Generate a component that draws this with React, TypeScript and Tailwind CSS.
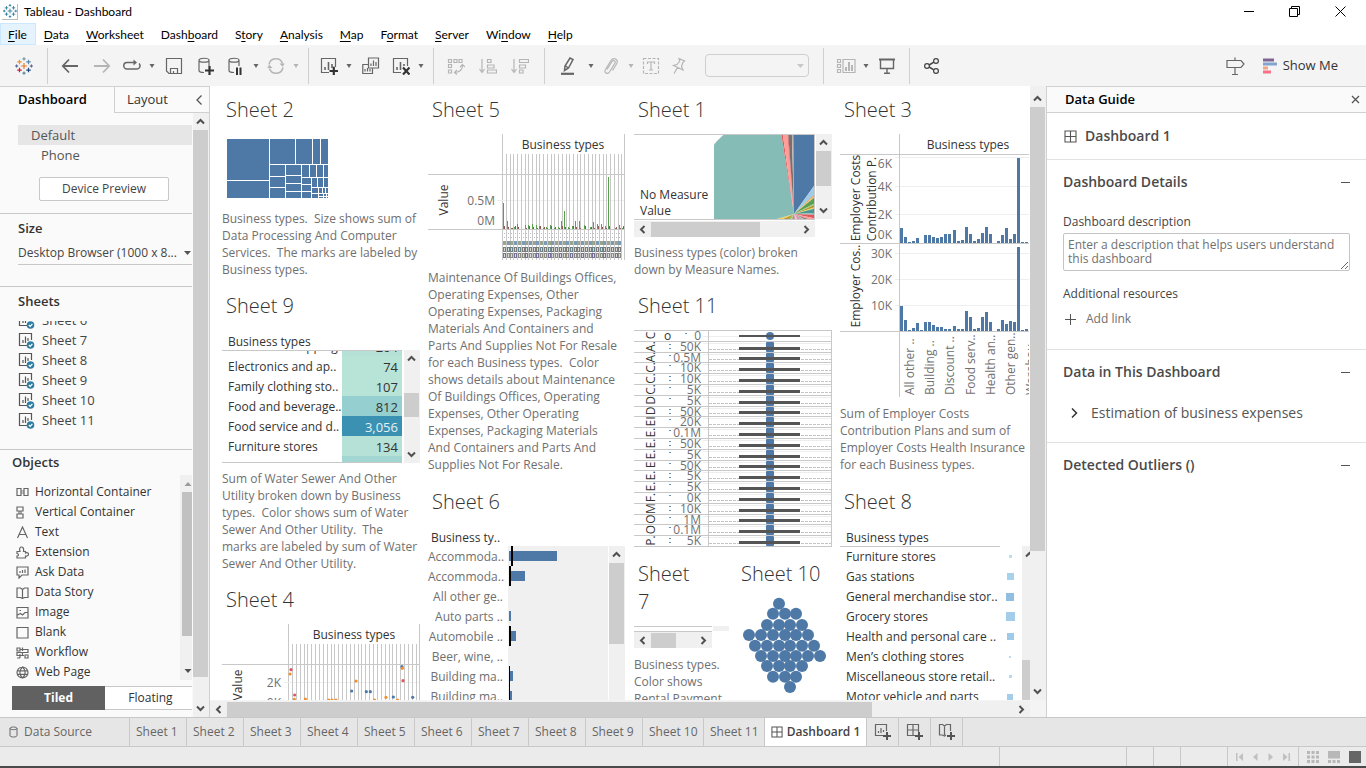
import React from "react";
import { clsx } from "clsx";

type Kids = { children?: React.ReactNode };

/* ---------- small shared pieces ---------- */

function Chevron({ dir, className }: { dir: "up" | "down" | "left" | "right"; className?: string }) {
  const d = {
    up: "M2 7.5 L5.5 4 L9 7.5",
    down: "M2 3.5 L5.5 7 L9 3.5",
    left: "M7.5 2 L4 5.5 L7.5 9",
    right: "M3.5 2 L7 5.5 L3.5 9",
  }[dir];
  return (
    <svg width="11" height="11" viewBox="0 0 11 11" className={className} fill="none" stroke="#505050" strokeWidth="2">
      <path d={d} />
    </svg>
  );
}

function VScroll({ className, lead = "", thumb, tight }: { className?: string; lead?: string; thumb: string; tight?: boolean }) {
  return (
    <div className={clsx("flex w-4 shrink-0 flex-col bg-[#f0f0f0]", className)}>
      <div className="flex h-[17px] w-[15px] shrink-0 items-center justify-center">
        <Chevron dir="up" />
      </div>
      <div className="flex min-h-0 w-full flex-1 flex-col">
        <div className={clsx("shrink-0", lead)} />
        <div className={clsx("w-[15px] shrink-0 bg-[#cdcdcd]", thumb)} />
      </div>
      {!tight && (
        <div className="flex h-[17px] w-[15px] shrink-0 items-center justify-center">
          <Chevron dir="down" />
        </div>
      )}
    </div>
  );
}

function HScroll({ className, thumb }: { className?: string; thumb: string }) {
  return (
    <div className={clsx("flex h-4 shrink-0 items-center bg-[#f0f0f0]", className)}>
      <div className="flex w-[17px] shrink-0 justify-center">
        <Chevron dir="left" />
      </div>
      <div className="h-[15px] min-w-0 flex-1">
        <div className={clsx("h-full bg-[#cdcdcd]", thumb)} />
      </div>
      <div className="flex w-[17px] shrink-0 justify-center">
        <Chevron dir="right" />
      </div>
    </div>
  );
}

function TableauLogo({ size, mono }: { size: number; mono?: boolean }) {
  const crosses: [number, number, number, string][] = [
    [10, 10, 3.4, "#e8762d"],
    [5, 5.5, 2.5, "#eb912c"],
    [15, 5.5, 2.5, "#5c87a8"],
    [5, 14.5, 2.5, "#c72035"],
    [15, 14.5, 2.5, "#1f457e"],
    [10, 2, 1.8, "#7199a6"],
    [10, 18, 1.8, "#59879b"],
    [1.8, 10, 1.8, "#5b6591"],
    [18.2, 10, 1.8, "#5b6591"],
  ];
  return (
    <svg width={size} height={size} viewBox="0 0 20 20" fill="none" strokeWidth="1.3">
      {crosses.map(([x, y, r, c]) => (
        <path key={`${x}-${y}`} d={`M${x - r} ${y}H${x + r}M${x} ${y - r}V${y + r}`} stroke={mono ? "#2f7f9f" : c} />
      ))}
    </svg>
  );
}

function Icon({ children, w = 18, h = 18, color = "#666" }: Kids & { w?: number; h?: number; color?: string }) {
  return (
    <svg width={w} height={h} viewBox={`0 0 ${w} ${h}`} fill="none" stroke={color} strokeWidth="1.2">
      {children}
    </svg>
  );
}

/* ---------- menu and toolbar ---------- */

const menus: [string, number][] = [
  ["File", 0], ["Data", 0], ["Worksheet", 0], ["Dashboard", 4], ["Story", 1], ["Analysis", 0],
  ["Map", 0], ["Format", 1], ["Server", 0], ["Window", 2], ["Help", 0],
];

function Tool({ label, w = "w-8", children }: Kids & { label: string; w?: string }) {
  return (
    <button aria-label={label} className={clsx("flex h-full shrink-0 items-center justify-center", w)}>
      {children}
    </button>
  );
}

function Caret({ label, light }: { label: string; light?: boolean }) {
  return (
    <button aria-label={label} className="flex h-full w-3 shrink-0 items-center justify-center">
      <svg width="6" height="4" viewBox="0 0 6 4" fill={light ? "#b5b5b5" : "#666"}>
        <path d="M0.5 0H5.5L3 4Z" />
      </svg>
    </button>
  );
}

const Sep = () => <div className="h-9 w-px shrink-0 bg-[#d0d0d0]" />;

function Toolbar() {
  const g = "#b5b5b5";
  return (
    <div className="flex h-[41px] shrink-0 items-center bg-[#f4f4f4]">
      <Tool label="Start page" w="w-[47px]"><TableauLogo size={18} /></Tool>
      <Sep />
      <div className="flex h-full items-center px-1.5">
        <Tool label="Undo"><Icon><path strokeWidth="1.8" d="M17 9H2M8 2.5L1.8 9L8 15.5" /></Icon></Tool>
        <Tool label="Redo"><Icon color={g}><path strokeWidth="1.8" d="M1 9H16M10 2.5L16.2 9L10 15.5" /></Icon></Tool>
        <Tool label="Replay" w="w-7"><Icon><path d="M11 5.500H4A3.200 3.200 0 0 0 4 12H14A3.200 3.200 0 0 0 16 6.500" strokeWidth="1.500" /><path d="M10.500 2.500L14 5.500L10.500 8.500Z" fill="#666" stroke="none" /></Icon></Tool>
        <Caret label="Replay options" />
        <Tool label="Save"><Icon><path d="M1.5 1.5H16.5V16.5H4L1.5 14ZM5.5 16V11.5H12.5V16M8.5 16V14" /></Icon></Tool>
        <Tool label="New data source"><Icon><path d="M2 3.2C2 0.6 12 0.6 12 3.2S2 5.800 2 3.200V13.500C2 15 4.500 15.500 7 15.500M12 3.200V9" /><path d="M8 13.500H17M12.500 9V18" strokeWidth="2.200" stroke="#333" /></Icon></Tool>
        <Tool label="Pause updates" w="w-7"><Icon><path d="M2 3.2C2 0.6 12 0.6 12 3.2S2 5.8 2 3.2V13.5C2 15 4 15.500 7 15.500M12 3.200V9" /><path d="M10 10.500V18M13.500 10.500V18" strokeWidth="2" stroke="#333" /></Icon></Tool>
        <Caret label="Pause options" />
        <Tool label="Refresh" w="w-7"><Icon color={g}><path d="M2 7.500A7 7 0 0 1 15.500 6.500M16 10.500A7 7 0 0 1 2.500 11.500" strokeWidth="1.500" /><path d="M12.500 6.500H17.800L15.500 9.800ZM0.200 11H5.500L2.300 7.800Z" fill={g} stroke="none" /></Icon></Tool>
        <Caret label="Refresh options" light />
      </div>
      <Sep />
      <div className="flex h-full items-center px-1.5">
        <Tool label="New worksheet" w="w-7"><Icon><path d="M9 15.500H1.500V1.500H15.500V10" /><path d="M5 13V10M8.500 13V5M12 11V7" strokeWidth="1.600" /><path d="M9.500 14H18M13.800 9.800V18" strokeWidth="2.200" stroke="#333" /></Icon></Tool>
        <Caret label="Worksheet options" />
        <Tool label="Duplicate"><Icon><path d="M6.500 1H16.500V11H6.500ZM10.500 11V16.500H0.800V7.500H6" /><path d="M9 9V6.500M11.500 9V3.500M14 9V5M3 14.500V12M5.500 14.500V11M8 14.500V12" /></Icon></Tool>
        <Tool label="Clear sheet" w="w-7"><Icon><path d="M9 15.500H1.500V1.500H15.500V9" /><path d="M5 13V10M8.500 13V5M12 9V7" strokeWidth="1.600" /><path d="M11 10.500L17.500 17.500M17.500 10.500L11 17.500" strokeWidth="2.200" stroke="#333" /></Icon></Tool>
        <Caret label="Clear options" />
      </div>
      <Sep />
      <div className="flex h-full items-center pr-2 pl-1.5">
        <Tool label="Swap rows and columns"><Icon color={g}><path d="M1.500 2.500H4.500V5.500H1.500ZM7 2.500H10V5.500H7ZM12 2.500H15V5.500H12ZM1.500 7.500H4.500V10.500H1.500ZM1.500 13H4.500V16H1.500ZM15.500 8C15.500 12 13 15 8 15.500" /><path d="M13 10L15.500 7.500L18 10M10 13L7.500 15.500L10 17.500" /></Icon></Tool>
        <Tool label="Sort ascending"><Icon color={g}><path d="M3 2V15M0.500 12L3 15.500L5.500 12M8.500 2.500H12V5.500H8.500ZM8.500 8H15V11H8.500ZM8.500 13H17.500V16H8.500Z" /></Icon></Tool>
        <Tool label="Sort descending"><Icon color={g}><path d="M3 2V15M0.500 12L3 15.500L5.500 12M8.500 2.500H17.500V5.500H8.500ZM8.500 8H14.500V11H8.500ZM8.500 13H12V16H8.500Z" /></Icon></Tool>
      </div>
      <Sep />
      <div className="flex h-full items-center pr-[13px] pl-2">
        <Tool label="Highlight"><Icon><path d="M10 1L13 2.500L8.500 11L4.500 13.500L5 9ZM5.500 9L8.500 11" strokeWidth="1.500" /><path d="M1 16.800H14" strokeWidth="2.200" /></Icon></Tool>
        <Caret label="Highlight options" />
        <Tool label="Group" w="w-7"><Icon color={g}><path d="M5 12.500L10 4.500C11.500 2.500 14 4 13 6L7.500 15C5.500 18 1.500 15.500 3.500 12.500L9 3.500C11.500 -0.500 17 2.500 14.500 7L10.500 13.500" /></Icon></Tool>
        <Caret label="Group options" light />
        <Tool label="Show mark labels" w="w-7"><Icon color={g}><path d="M1.500 1.500H16.500V16.500H1.500Z" strokeDasharray="3 1.500" /><path d="M5.500 7V5H12.500V7M9 5V13M7 13H11" /></Icon></Tool>
        <Tool label="Fix axes" w="w-7"><Icon color={g}><path d="M9 1.500L14.500 4L12.800 5.500L11.500 9.500L13 13L3.500 8.500L7 7.500L9.800 4ZM7.500 10.500L4 16.500" /></Icon></Tool>
        <select aria-label="Fit" disabled className="ml-3 h-[23px] w-[104px] appearance-none rounded-sm border border-[#cfcfcf] bg-transparent" />
        <svg width="7" height="4" viewBox="0 0 7 4" fill="#c8c8c8" className="mr-1.5 -ml-3"><path d="M0 0H7L3.500 4Z" /></svg>
      </div>
      <Sep />
      <div className="flex h-full items-center px-2">
        <Tool label="Show cards" w="w-7"><Icon w={20} color={g}><path d="M1.500 2.500H4.500V5.500H1.500ZM1.500 7.500H4.500V10.500H1.500ZM1.500 12.500H4.500V15.500H1.500ZM7 2.500H19V15.500H7Z" /><path d="M10 14V10M13 14V5M16 14V8" strokeWidth="2" /></Icon></Tool>
        <Caret label="Card options" />
        <Tool label="Presentation mode" w="w-[29px]"><Icon><path d="M1 2.500H17" strokeWidth="2" /><path d="M2.500 3V11.500H15.500V3M9 11.500V16M6 16.300H12" strokeWidth="1.400" /></Icon></Tool>
      </div>
      <Sep />
      <div className="flex h-full items-center px-1.5">
        <Tool label="Share"><Icon color="#444"><circle cx="4" cy="9" r="2.400" /><circle cx="13" cy="4" r="2.400" /><circle cx="13" cy="14" r="2.400" /><path d="M6.200 8L10.800 5.200M6.200 10L10.800 12.800" strokeWidth="1.500" /></Icon></Tool>
      </div>
      <div className="ml-auto flex h-full items-center pr-7">
        <Tool label="Tour"><Icon w={20}><path d="M2 3.500H16L19 7L16 10.500H2ZM10 0.500V3.500M10 10.500V18M7 17.500H13" /></Icon></Tool>
        <button className="ml-3 flex h-full items-center gap-1.5 text-[13px] text-[#333]">
          <svg width="14" height="16" viewBox="0 0 14 16">
            <path fill="#7e6594" d="M0 0.500H11V3.500H0Z" /><path fill="#83a4cf" d="M0 4.500H14V7.500H0Z" />
            <path fill="#f4a582" d="M0 8.500H5V11.500H0Z" /><path fill="#fb7086" d="M0 12.500H8V15.500H0Z" />
          </svg>
          Show Me
        </button>
      </div>
    </div>
  );
}

/* ---------- left pane ---------- */

function SheetIcon() {
  return (
    <svg width="18" height="18" viewBox="0 0 18 18" fill="none" stroke="#555" strokeWidth="1.200">
      <path d="M9 13.500H1.500V1.500H13.500V8M5 11V8M7.500 11V4.500M10 9V6" />
      <circle cx="12.500" cy="13" r="3.800" fill="#2f7ea1" stroke="none" />
      <path d="M10.800 13L12.200 14.400L14.400 11.800" stroke="#fff" />
    </svg>
  );
}

const objects: [string, React.ReactNode][] = [
  ["Horizontal Container", <g key="p"><path d="M5 4H8V8H5Z" fill="#c4c4c4" stroke="none" /><path d="M1 2.500H5V9.500H1ZM8 2.500H12V9.500H8Z" /></g>],
  ["Vertical Container", <g key="p"><path d="M2 5H6V8H2Z" fill="#aaa" stroke="none" /><path d="M1 1H7V5H1ZM1 8H7V12H1Z" /></g>],
  ["Text", <path key="p" d="M1.500 12L6.500 1L11.500 12M3.500 8.500H9.500" />],
  ["Extension", <path key="p" d="M1 5.500H4C3 2.500 4 1 5.500 1S8 2.500 7.500 5.500H9.500V7C12 6 12.500 7.500 12.500 8.500S11 10.500 9.500 10V12H1V10C3 10 3 7.500 1 7.500Z" />],
  ["Ask Data", <path key="p" d="M1 1H12V9H6L3 12V9H1ZM4 7V5M6.500 7V4M9 7V3.500" />],
  ["Data Story", <path key="p" d="M1 2H4.500L6.500 3.500L8.500 2H12V11.500H8.500L6.500 12.500L4.500 11.500H1ZM6.500 3.500V12" />],
  ["Image", <path key="p" d="M1 1.500H12V12H1ZM1.500 9L4.500 7.500L6.500 9L9 6.500H12M3.500 4.500H5" />],
  ["Blank", <path key="p" d="M1 1.500H12V12H1Z" />],
  ["Workflow", <path key="p" d="M1 2H4V5H1ZM4 3.500H12V6.500H1V9.500H8M6.500 1.500V5M4 8V12M1 12H4M9 9H12V12H9ZM6.500 6V9" />],
  ["Web Page", <path key="p" d="M6.500 1A5.500 5.500 0 1 0 6.500 12A5.500 5.500 0 1 0 6.500 1C3 4 3 9 6.500 12C10 9 10 4 6.500 1M1.500 4.800H11.500M1.500 8.300H11.500" />],
];

function LeftPane() {
  return (
    <aside className="flex w-[210px] shrink-0 flex-col border-t border-r border-[#d0d0d0] bg-[#fafafa]">
      <div className="flex h-[26px] shrink-0 text-[13px] text-[#333]">
        <button className="w-[114px] pl-[18px] text-left font-semibold text-black">Dashboard</button>
        <button className="flex-1 border-b border-l border-[#d0d0d0] pl-3 text-left">Layout</button>
        <button aria-label="Collapse pane" className="flex w-3.5 items-center border-b border-[#d0d0d0]">
          <svg width="8" height="10" viewBox="0 0 8 10" fill="none" stroke="#555" strokeWidth="1.300"><path d="M6.500 0.500L2 5L6.500 9.500" /></svg>
        </button>
      </div>
      <div className="flex min-h-0 flex-1">
        <div className="flex min-h-0 flex-1 flex-col pt-3">
          <button className="ml-[18px] h-5 shrink-0 bg-[#e6e6e6] pl-[13px] text-left text-[13px] leading-4 text-[#555]">Default</button>
          <button className="ml-[18px] h-5 shrink-0 pl-[23px] text-left text-[13px] leading-4 text-[#555]">Phone</button>
          <button className="mt-3 ml-[39px] h-6 w-[130px] shrink-0 rounded-xs border border-[#c8c8c8] bg-white text-xs text-[#444]">Device Preview</button>
          <div className="mt-3 h-[73px] shrink-0 border-t border-[#c8c8c8] pt-1 pl-[18px]">
            <label htmlFor="size" className="block text-[13px] leading-5 font-semibold text-[#333]">Size</label>
            <div className="mt-1 flex h-[23px] items-center border-b border-[#c8c8c8]">
              <select id="size" className="w-full min-w-0 appearance-none bg-transparent text-xs text-[#444]">
                <option>Desktop Browser (1000 x 8...</option>
              </select>
              <svg width="7" height="4" viewBox="0 0 7 4" fill="#555" className="mr-px shrink-0"><path d="M0 0H7L3.500 4Z" /></svg>
            </div>
          </div>
          <div className="flex h-[163px] shrink-0 flex-col border-t border-[#c8c8c8] pt-1">
            <h2 className="pl-[18px] text-[13px] leading-5 font-semibold text-[#333]">Sheets</h2>
            <div className="mt-2.5 flex h-[110px] flex-col justify-end overflow-hidden text-[13px] text-[#444]">
              {[6, 7, 8, 9, 10, 11].map((n) => (
                <a key={n} href={`#sheet-${n}`} className="flex h-5 shrink-0 items-center gap-1.5 pl-[18px]">
                  <SheetIcon /> Sheet {n}
                </a>
              ))}
            </div>
          </div>
          <div className="flex min-h-0 flex-1 flex-col border-t border-[#c8c8c8]">
            <h2 className="h-[25px] shrink-0 pt-0.5 pl-3 text-[13px] leading-5 font-semibold text-[#333]">Objects</h2>
            <div className="flex min-h-0 flex-1">
              <ul className="min-w-0 flex-1 overflow-hidden pt-[7px] text-xs text-[#333]">
                {objects.map(([name, icon]) => (
                  <li key={name} className="flex h-5 items-center gap-1.5 pl-4">
                    <Icon w={13} h={13}>{icon}</Icon> {name}
                  </li>
                ))}
              </ul>
              <div className="flex w-3 flex-col items-end bg-[#f0f0f0]">
                <svg width="10" height="17" viewBox="0 0 10 17" fill="#9a9a9a"><path d="M2.500 11H9.500L6 7Z" /></svg>
                <div className="h-[70%] w-2.5 bg-[#c1c1c1]" />
                <svg width="10" height="17" viewBox="0 0 10 17" fill="#505050" className="mt-auto"><path d="M2.500 6H9.500L6 10Z" /></svg>
              </div>
            </div>
            <div className="mt-1.5 mb-[7px] ml-3 flex h-6 shrink-0 text-xs">
              <button className="w-[93px] bg-[#616161] font-bold text-white">Tiled</button>
              <button className="flex-1 border-y border-[#c8c8c8] bg-white pl-1 text-[#333]">Floating</button>
            </div>
          </div>
        </div>
        <VScroll className="ml-px" thumb="h-[96%]" />
      </div>
    </aside>
  );
}

/* ---------- dashboard sheets ---------- */

function Sheet({ title, h, children, caption }: Kids & { title: string; h: string; caption?: string }) {
  return (
    <section className={clsx("shrink-0 overflow-hidden pl-1", h)}>
      <h2 className="pt-1.5 pb-0.5 pl-1 text-xl leading-7 font-light whitespace-pre text-[#333]">{title}</h2>
      {children}
      {caption && <p className="text-xs leading-[17px] whitespace-pre text-[#707070]">{caption}</p>}
    </section>
  );
}

type ChartProps = Kids & { x: number; y: number; w: number; h: number };
function Chart({ x, y, w, h, children }: ChartProps) {
  return (
    <svg width={w} height={h} viewBox={`${x} ${y} ${w} ${h}`} className="block max-w-none" fontSize="12" fill="#707070">
      {children}
    </svg>
  );
}

function Line({ x1, y1, x2, y2, c = "#c8c8c8" }: { x1: number; y1: number; x2: number; y2: number; c?: string }) {
  return x1 === x2
    ? <rect x={x1} y={y1} width="1" height={y2 - y1} fill={c} />
    : <rect x={x1} y={y1} width={x2 - x1} height="1" fill={c} />;
}

function Turned({ x, y, children, fill = "#333", anchor = "middle" }: { x: number; y: number; children: string; fill?: string; anchor?: "middle" | "start" }) {
  return <text transform={`translate(${x} ${y}) rotate(-90)`} textAnchor={anchor} fill={fill}>{children}</text>;
}

const blue = "#4e79a7";

const treemap: [number, number, number, number][] = [
  [45, 159, 171, 282], [45, 285, 171, 336], [174, 159, 249, 234], [252, 159, 300, 234], [303, 159, 324, 234], [327, 159, 348, 234],
  [174, 237, 219, 270], [174, 273, 219, 303], [174, 306, 219, 336], [222, 237, 267, 267], [222, 270, 267, 291], [222, 294, 267, 315], [222, 318, 267, 336],
  [270, 237, 291, 273], [294, 237, 312, 273], [315, 237, 333, 273], [336, 237, 348, 273],
  [270, 276, 297, 294], [270, 297, 297, 315], [270, 318, 297, 336], [300, 276, 315, 303], [318, 276, 333, 303], [336, 276, 348, 303],
  [300, 306, 318, 321], [300, 324, 318, 336], [321, 306, 330, 321], [333, 306, 339, 321], [342, 306, 348, 321],
  [321, 324, 333, 330], [321, 333, 333, 336], [336, 324, 342, 330], [336, 333, 342, 336], [345, 324, 348, 330], [345, 333, 348, 336],
];

const heat: [string, string, string][] = [
  ["Electronic shopping ..", "264", "bg-[#b6e1d6] text-[#333]"],
  ["Electronics and ap..", "74", "bg-[#b8e3d7] text-[#333]"],
  ["Family clothing sto..", "107", "bg-[#b8e3d7] text-[#333]"],
  ["Food and beverage..", "812", "bg-[#96cfd0] text-[#333]"],
  ["Food service and d..", "3,056", "bg-[#3a91b1] text-[#e4f1f5]"],
  ["Furniture stores", "134", "bg-[#b6e1d6] text-[#333]"],
  ["Gas stations", "586", "bg-[#a1d6d2] text-[#333]"],
];

const strip: [number, number, string][] = [
  [237, 629, "#e15759"], [234, 642, "#f28e2b"], [248, 705, "#e15759"], [247, 718, "#f28e2b"], [432, 663, "#f28e2b"], [419, 693, blue],
  [463, 695, blue], [475, 695, blue], [570, 620, blue], [571, 625, "#f28e2b"], [573, 662, "#e15759"], [522, 712, "#f28e2b"], [544, 711, blue],
  [602, 712, blue], [280, 717, "#f28e2b"], [350, 720, "#f28e2b"], [360, 720, "#f28e2b"], [372, 720, "#f28e2b"], [488, 720, "#f28e2b"], [557, 720, "#f28e2b"],
];

const spikes: [number, number][] = [
  [238, 351], [250, 405], [262, 426], [271, 423], [280, 414], [304, 417], [313, 417], [325, 414], [337, 417], [346, 420], [358, 426], [367, 423],
  [379, 417], [391, 426], [403, 423], [412, 405], [421, 375], [433, 423], [445, 420], [454, 405], [466, 405], [479, 417], [499, 423], [508, 408],
  [520, 414], [532, 414], [542, 420], [553, 273], [574, 426], [586, 417], [595, 426],
];

const tall = [426, 453, 468, 465, 456, 471, 447, 447, 453, 456, 453, 444, 444, 432, 465, 462, 423, 444, 465, 459, 441, 423, 444, 471, 465, 447, 426, 459, 444, 216, 468, 468];
const low = [660, 702, 732, 726, 711, 732, 708, 708, 717, 723, 723, 729, 729, 720, 729, 729, 675, 693, 729, 726, 693, 678, 708, 735, 729, 702, 714, 705, 708, 483, 732, 729];

const rowLines = [330, 341, 352, 362, 373, 384, 395, 406, 416, 427, 438, 449, 460, 470, 481, 492, 503, 514, 524, 535, 546];
const rowTicks = ["0", "50K", "0.5M", "10K", "10K", "5K", "5K", "50K", "20K", "0.1M", "50K", "5K", "50K", "5K", "5K", "0K", "10K", "1M", "0.1M", "5K"];
const rowNames = ["C", "A.", "A.", "C.", "C.", "C.", "D", "D", "EI", "E.", "E.", "E.", "E", "E.", "E.", "F.", "M", "O", "O", "P."];

const bubbles: [number, number[]][] = [
  [671, [447]], [701, [429, 465, 498]], [735, [411, 447, 480, 516]], [765, [357, 393, 429, 465, 498, 534]], [797, [375, 411, 447, 480, 516, 552]],
  [828, [393, 429, 465, 498, 534, 570]], [858, [411, 447, 480, 516]], [890, [429, 465, 498]], [921, [480]],
];

const slices: [number, number, string][] = [
  [0, 35.5, blue], [35.5, 46.5, "#a0cbe8"], [46.5, 49, "#f28e2b"], [49, 51, "#ffbe7d"], [51, 63, "#59a14f"], [63, 66, "#8cd17d"], [66, 72, "#b6992d"],
  [72, 75, "#f1ce63"], [75, 87, "#499894"], [87, 92, "#86bcb6"], [92, 102, "#e15759"], [102, 110, "#ff9d9a"], [110, 116, "#79706e"],
  [116, 132, "#bab0ac"], [132, 145, "#d37295"], [145, 170, "#fabfd2"], [170, 185, "#b07aa1"], [185, 198, "#4e79a7"], [198, 207, "#f28e2b"],
  [207, 222, "#8cd17d"], [222, 228, "#59a14f"], [228, 246, "#b6992d"], [246, 254, "#f1ce63"], [254, 351, "#86bcb6"], [351, 352, "#e15759"],
  [352, 355.3, "#ff9d9a"], [355.3, 355.9, "#e15759"], [355.9, 358.5, "#79706e"], [358.5, 359.5, "#bab0ac"], [359.5, 360, "#79706e"],
];

function slicePath(a: number, b: number) {
  const p = (d: number) => {
    const t = (d * Math.PI) / 180;
    return `${794 + 106 * Math.sin(t)} ${214 - 106 * Math.cos(t)}`;
  };
  return `M794 214L${p(a)}A106 106 0 0 1 ${p(b)}Z`;
}

const bars6: [string, number, number][] = [
  ["Accommoda..", 48, 2], ["Accommoda..", 16, 2], ["All other ge..", 0, 0], ["Auto parts ..", 2, 0],
  ["Automobile ..", 7, 2], ["Beer, wine, ..", 0, 0], ["Building ma..", 4, 1], ["Building ma..", 3, 1],
];

const rows8: [string, string][] = [
  ["Furniture stores", "size-[3px] bg-[#b9ddf1]"], ["Gas stations", "size-[7px] bg-[#a8d2ec]"], ["General merchandise stor..", "size-2 bg-[#92bfe0]"],
  ["Grocery stores", "size-[9px] bg-[#a3cde9]"], ["Health and personal care ..", "size-[7px] bg-[#9fcbe8]"], ["Men’s clothing stores", "size-0.5 bg-[#b9ddf1]"],
  ["Miscellaneous store retail..", "size-[3px] bg-[#b3daf0]"], ["Motor vehicle and parts", "size-1.5 bg-[#a3cde9]"],
];

function Canvas() {
  return (
    <div className="flex min-h-0 flex-1 overflow-hidden bg-white pt-1 pl-2">
      <div className="flex w-[206px] shrink-0 flex-col">
        <Sheet title="Sheet 2" h="h-[196px]" caption={"Business types.  Size shows sum of\nData Processing And Computer\nServices.  The marks are labeled by\nBusiness types."}>
          <Chart x={222} y={126} w={202} h={84}>
            {treemap.map(([a, b, c, d], i) => (
              <rect key={i} x={212 + a / 3} y={86 + b / 3} width={(c - a) / 3} height={(d - b) / 3} fill={blue} />
            ))}
          </Chart>
        </Sheet>
        <Sheet title="Sheet 9" h="h-[294px]" caption={"Sum of Water Sewer And Other\nUtility broken down by Business\ntypes.  Color shows sum of Water\nSewer And Other Utility.  The\nmarks are labeled by sum of Water\nSewer And Other Utility."}>
          <h3 className="h-7 pt-2.5 pl-1.5 text-xs leading-5 text-[#333]">Business types</h3>
          <div className="mb-[7px] flex h-[113px]">
            <div className="w-[180px] overflow-hidden border-y border-[#c8c8c8]">
              <table className="-mt-[15px] w-full table-fixed text-xs text-[#333]">
                <tbody>
                  {heat.map(([name, v, tone]) => (
                    <tr key={name} className="h-5">
                      <th scope="row" className="w-[120px] overflow-hidden p-0 pt-px pl-1.5 text-left leading-4 font-normal whitespace-nowrap">{name}</th>
                      <td className={clsx("p-0 pt-px pr-1 text-right text-[13px] leading-4", tone)}>{v}</td>
                    </tr>
                  ))}
                </tbody>
              </table>
            </div>
            <VScroll className="ml-0.5" lead="h-[26px]" thumb="h-6" />
          </div>
        </Sheet>
        <Sheet title="Sheet 4" h="h-[294px]">
          <Chart x={222} y={616} w={202} h={110}>
            <Line x1={288} y1={624} x2={288} y2={726} />
            <Line x1={419} y1={624} x2={419} y2={726} />
            <Line x1={222} y1={664} x2={420} y2={664} />
            <Line x1={284} y1={682} x2={419} y2={682} c="#eee" />
            {Array.from({ length: 33 }, (_, i) => {
              const x = Math.round(292 + i * 3.86);
              return <Line key={i} x1={x} y1={644} x2={x} y2={726} />;
            })}
            <text x="354" y="639" textAnchor="middle" fill="#333">Business types</text>
            <Turned x={242} y={685}>Value</Turned>
            <text x="281" y="687" textAnchor="end">2K</text>
            <text x="281" y="707" textAnchor="end">0K</text>
            {strip.map(([x, y, c], i) => <circle key={i} cx={212 + x / 3} cy={460 + y / 3} r="1.600" fill={c} />)}
          </Chart>
        </Sheet>
      </div>

      <div className="flex w-[206px] shrink-0 flex-col">
        <Sheet title="Sheet 5" h="h-[392px]" caption={"Maintenance Of Buildings Offices,\nOperating Expenses, Other\nOperating Expenses, Packaging\nMaterials And Containers and\nParts And Supplies Not For Resale\nfor each Business types.  Color\nshows details about Maintenance\nOf Buildings Offices, Operating\nExpenses, Other Operating\nExpenses, Packaging Materials\nAnd Containers and Parts And\nSupplies Not For Resale."}>
          <Chart x={428} y={126} w={202} h={143}>
            <Line x1={502} y1={134} x2={502} y2={260} />
            <Line x1={624} y1={134} x2={624} y2={260} />
            <Line x1={428} y1={174} x2={625} y2={174} />
            <Line x1={497} y1={200} x2={624} y2={200} c="#eee" />
            {Array.from({ length: 32 }, (_, i) => {
              const x = Math.round(506 + i * 3.72);
              return (
                <g key={i}>
                  <Line x1={x} y1={154} x2={x} y2={260} />
                  <rect x={x - 3} y={241} width="3" height="4" fill={i % 2 ? "#7d9ab5" : "#9aa38c"} />
                  <rect x={x - 3} y={247} width="3" height="5" fill={i % 2 ? "#7a7a7a" : "#6a8589"} />
                  <rect x={x - 3} y={253} width="3" height="5" fill={i % 3 ? "#8d8d86" : "#77709a"} />
                  <rect x={x - 2} y={248} width="1" height="3" fill="#d8d8d0" />
                  <rect x={x - 2} y={254} width="1" height="3" fill="#ddd" />
                  <rect x={x - 2} y={233} width="1" height="1" fill="#b9b9c4" />
                  <rect x={x - 2} y={237} width="1" height="1" fill="#b9b9c4" />
                </g>
              );
            })}
            {spikes.map(([x, y], i) => (
              <g key={i}>
                <rect x={Math.round(424 + x / 3)} y={86 + y / 3} width="1" height={(429 - y) / 3} fill="#59a14f" />
                <rect x={Math.round(424 + x / 3) + 1} y={226 + (i % 3)} width="1" height={3 - (i % 3)} fill="#8c5a4f" />
              </g>
            ))}
            <Line x1={428} y1={229} x2={625} y2={229} />
            <text x="563" y="149" textAnchor="middle" fill="#333">Business types</text>
            <Turned x={448} y={200}>Value</Turned>
            <text x="495" y="205" textAnchor="end">0.5M</text>
            <text x="495" y="225" textAnchor="end">0M</text>
          </Chart>
        </Sheet>
        <Sheet title="Sheet 6" h="h-[294px]">
          <h3 className="h-7 pt-2.5 pl-[3px] text-xs leading-5 text-[#333]">Business ty..</h3>
          <div className="flex">
            <ul className="w-[75px] shrink-0 pt-px text-right text-xs leading-5 text-[#707070]">
              {bars6.map(([name], i) => <li key={i} className="whitespace-nowrap">{name}</li>)}
            </ul>
            <svg width="100" height="160" viewBox="0 0 100 160" className="ml-[5px] shrink-0 bg-[#f0f0f0]">
              {bars6.map(([, w, ref], i) => (
                <g key={i}>
                  <rect x="1" y={i * 20 + 5} width={w} height="10" fill={blue} />
                  <rect x={i === 0 ? 3 : 1} y={i * 20} width={ref} height="20" fill="#000" />
                </g>
              ))}
            </svg>
            <VScroll className="ml-px" thumb="h-[81px]" tight />
          </div>
        </Sheet>
      </div>

      <div className="flex w-[206px] shrink-0 flex-col">
        <Sheet title="Sheet 1" h="h-[196px]" caption={"Business types (color) broken\ndown by Measure Names."}>
          <div className="flex pt-2">
            <div className="flex h-[86px] w-[181px] shrink-0 items-end border-y border-r border-[#c8c8c8]">
              <p className="w-20 pl-1.5 text-xs leading-4 whitespace-nowrap text-[#333]">No Measure<br />Value</p>
              <Chart x={714} y={135} w={100} h={84}>
                {slices.map(([a, b, c]) => <path key={a} d={slicePath(a, b)} fill={c} />)}
              </Chart>
            </div>
            <VScroll className="ml-px h-[85px]" thumb="h-[35px]" />
          </div>
          <HScroll className="mt-px mb-[7px] w-[181px]" thumb="w-[109px]" />
        </Sheet>
        <Sheet title="Sheet 11" h="h-[268px]">
          <Chart x={634} y={322} w={202} h={232}>
            {rowTicks.map((t, i) => {
              const top = rowLines[i];
              const end = rowLines[i + 1];
              return (
                <g key={i}>
                  <rect x="703" y={i ? top + 2 : 336} width="128" height="1" fill="#eee" />
                  {i > 0 && <path d={`M709 ${end - 2.5}H831`} stroke="#c4c4c4" strokeDasharray="3 1" />}
                  {i === 0 ? <circle cx="770" cy="336" r="4" fill={blue} /> : <rect x="766" y={top + 1} width="8" height={end - top - 1} rx="1" fill={blue} />}
                  <rect x="739" y={i ? end - 5 : 335} width="61" height={i ? 3 : 2} fill="#555" />
                  <Turned x={655} y={(top + end) / 2}>{rowNames[i]}</Turned>
                  <rect x={i ? 669 : 685} y={top + 3} width="2" height="1" fill="#5c8fc4" />
                  {i % 3 === 1 && <rect x="669" y={top + 7} width="2" height="1" fill="#5c8fc4" />}
                  <text x="701" y={top + 10} textAnchor="end">{t}</text>
                </g>
              );
            })}
            <text x="664" y="340" fill="#333">o</text>
            {rowLines.map((y) => <Line key={y} x1={634} y1={y} x2={832} y2={y} />)}
            <Line x1={708} y1={330} x2={708} y2={547} />
            <Line x1={831} y1={330} x2={831} y2={547} />
          </Chart>
        </Sheet>
        <div className="flex">
          <div className="w-[103px] shrink-0">
            <Sheet title={"Sheet\n7"} h="h-[196px]" caption={"Business types.\nColor shows\nRental Payment"}>
              <div className="mt-2 flex">
                <div className="h-1.5 w-[78px] border-y border-[#c8c8c8]" />
                <div className="ml-px h-[5px] w-4 bg-[#f0f0f0]" />
              </div>
              <HScroll className="mb-2 w-[78px]" thumb="w-[25px]" />
            </Sheet>
          </div>
          <Sheet title="Sheet 10" h="h-[196px]">
            <Chart x={737} y={590} w={98} h={110}>
              {bubbles.flatMap(([y, xs]) => xs.map((x) => <circle key={`${x}-${y}`} cx={630 + x / 3} cy={380 + y / 3} r="6" fill={blue} />))}
            </Chart>
          </Sheet>
        </div>
      </div>

      <div className="flex w-[206px] shrink-0 flex-col">
        <Sheet title="Sheet 3" h="h-[392px]" caption={"Sum of Employer Costs\nContribution Plans and sum of\nEmployer Costs Health Insurance\nfor each Business types."}>
          <Chart x={840} y={126} w={189} h={279}>
            {[157, 186, 214, 253, 279, 305].map((y) => <Line key={y} x1={895} y1={y} x2={1029} y2={y} c="#eee" />)}
            {tall.map((y, i) => <rect key={i} x={Math.round(900 + i * 4.04)} y={86 + y / 3} width="3" height={(471 - y) / 3} fill={blue} />)}
            {low.map((y, i) => <rect key={i} x={Math.round(900 + i * 4.04)} y={86 + y / 3} width="3" height={(735 - y) / 3} fill={blue} />)}
            {[154, 243, 331].map((y) => <Line key={y} x1={840} y1={y} x2={1029} y2={y} />)}
            <Line x1={899} y1={134} x2={899} y2={397} />
            <text x="968" y="149" textAnchor="middle" fill="#333">Business types</text>
            {([["6K", 168], ["4K", 191], ["2K", 219], ["0K", 239], ["30K", 258], ["20K", 284], ["10K", 310]] as [string, number][]).map(([t, y]) => (
              <text key={t} x="892" y={y} textAnchor="end">{t}</text>
            ))}
            <Turned x={860} y={198}>Employer Costs</Turned>
            <Turned x={876} y={199}>Contribution P.</Turned>
            <Turned x={860} y={286}>Employer Cos..</Turned>
            {["All other ..", "Building ..", "Discount ..", "Food serv..", "Health an..", "Other gen..", "Warehou.."].map((t, i) => (
              <Turned key={t} x={Math.round(914 + i * 20.2)} y={395} fill="#707070" anchor="start">{t}</Turned>
            ))}
          </Chart>
        </Sheet>
        <Sheet title="Sheet 8" h="h-[294px]">
          <h3 className="h-7 pt-2.5 pl-1.5 text-xs leading-5 text-[#333]">Business types</h3>
          <div className="flex">
            <table className="h-fit w-[180px] shrink-0 table-fixed text-xs text-[#333]">
              <tbody>
                {rows8.map(([name, mark], i) => (
                  <tr key={name} className="h-5">
                    <th scope="row" className={clsx("w-40 overflow-hidden p-0 pl-1.5 text-left font-normal whitespace-nowrap", i === 0 && "border-t border-[#c8c8c8]")}>{name}</th>
                    <td className="p-0"><div className={clsx("mx-auto", mark)} /></td>
                  </tr>
                ))}
              </tbody>
            </table>
            <VScroll className="ml-0.5" lead="h-[97px]" thumb="h-[50px]" tight />
          </div>
        </Sheet>
      </div>
    </div>
  );
}

/* ---------- right pane ---------- */

const Minus = () => <svg width="9" height="9" viewBox="0 0 9 9" stroke="#555"><path d="M0 4.500H9" /></svg>;

function Fold({ title, children }: Kids & { title: string }) {
  return (
    <section className="border-[#e2e2e2] px-4 pt-3 not-last:border-b">
      <h2>
        <button className="flex h-5 w-full items-center justify-between text-left text-sm font-semibold text-[#4a4a4a]">
          {title}<Minus />
        </button>
      </h2>
      {children}
    </section>
  );
}

function GridIcon({ size = 13 }: { size?: number }) {
  return (
    <svg width={size} height={size} viewBox="0 0 13 13" fill="none" stroke="#555" strokeWidth="1.100"><path d="M1 1H12V12H1ZM6.500 1V12M1 6.500H12" /></svg>
  );
}

function DataGuide() {
  return (
    <aside className="flex w-80 shrink-0 flex-col border-t border-l border-[#d0d0d0] bg-white">
      <div className="flex h-[26px] shrink-0 items-center justify-between border-b border-[#d0d0d0] bg-[#fafafa] pr-[6px] pl-[18px]">
        <h2 className="text-[13px] font-semibold text-black">Data Guide</h2>
        <button aria-label="Close Data Guide">
          <svg width="9" height="9" viewBox="0 0 9 9" stroke="#555" strokeWidth="1.300"><path d="M1 1L8 8M8 1L1 8" /></svg>
        </button>
      </div>
      <div className="flex h-[47px] shrink-0 items-center gap-2 border-b border-[#e2e2e2] pl-[17px] text-sm font-semibold text-[#4a4a4a]">
        <GridIcon /> Dashboard 1
      </div>
      <Fold title="Dashboard Details">
        <label htmlFor="desc" className="mt-5 block text-xs leading-5 text-[#444]">Dashboard description</label>
        <textarea id="desc" rows={2} className="mt-px block h-[38px] w-full resize rounded-xs border border-[#c4c4c4] px-1 py-1 text-xs leading-[14px] placeholder:text-[#707070]" placeholder="Enter a description that helps users understand this dashboard" />
        <h3 className="mt-[13px] text-xs leading-5 text-[#444]">Additional resources</h3>
        <button className="mt-[5px] mb-5 flex h-5 items-center gap-2.5 pl-0.5 text-xs text-[#707070]">
          <svg width="11" height="11" viewBox="0 0 11 11" stroke="#555"><path d="M0 5.500H11M5.500 0V11" /></svg>
          Add link
        </button>
      </Fold>
      <Fold title="Data in This Dashboard">
        <button className="mt-[21px] mb-[19px] flex h-5 items-center gap-3 pl-1.5 text-sm text-[#555]">
          <svg width="10" height="10" viewBox="0 0 10 10" fill="none" stroke="#333" strokeWidth="1.500"><path d="M3 0.500L7.500 5L3 9.500" /></svg>
          Estimation of business expenses
        </button>
      </Fold>
      <Fold title="Detected Outliers ()" />
    </aside>
  );
}

/* ---------- bottom bars ---------- */

function TabBar() {
  const plus = <path d="M9 13H17M13 9V17" strokeWidth="2" stroke="#555" />;
  return (
    <nav className="flex h-[30px] shrink-0 border-y border-[#c8c8c8] bg-[#e6e6e6] text-xs text-[#666]">
      <a href="#data-source" className="flex w-[130px] items-center gap-1.5 border-r border-[#c8c8c8] pl-[9px]">
        <svg width="9" height="12" viewBox="0 0 9 12" fill="none" stroke="#666"><path d="M1 2.500C1 0.500 8 0.500 8 2.500V9.500C8 11.500 1 11.500 1 9.500ZM1 2.500C1 4 8 4 8 2.500" /></svg>
        Data Source
      </a>
      {[1, 2, 3, 4, 5, 6, 7, 8, 9, 10, 11].map((n) => (
        <a key={n} href={`#sheet-${n}`} className={clsx("flex shrink-0 items-center border-r border-[#c8c8c8] pl-1.5", n > 9 ? "w-[61px]" : "w-[57px]")}>
          Sheet {n}
        </a>
      ))}
      <a href="#dashboard-1" className="flex w-[102px] items-center justify-center gap-1 border-r border-[#c8c8c8] bg-white font-semibold text-[#444]">
        <GridIcon size={12} /> Dashboard 1
      </a>
      {[
        ["New worksheet", "M9 12.500H1.500V1.500H12.500V8M4.500 10V8M7 10V5M9.500 9V7"],
        ["New dashboard", "M9 12.500H1.500V1.500H12.500V9M7 1.500V12.500M1.500 7H12.500"],
        ["New story", "M8 12L6.500 13L4.500 12H1.500V1.500H4.500L6.500 3L8.500 1.500H12.500V8M6.500 3V12"],
      ].map(([label, d]) => (
        <button key={label} aria-label={label} className="flex w-8 items-center justify-center border-r border-[#c8c8c8]">
          <Icon><path d={d} />{plus}</Icon>
        </button>
      ))}
    </nav>
  );
}

function StatusBar() {
  return (
    <footer className="flex h-[21px] shrink-0 justify-end border-b-2 border-[#4a4a4a] bg-[#ebebeb]">
      <div className="w-[127px] border-l border-[#c8c8c8]" />
      <div className="w-[27px] border-l border-[#c8c8c8]" />
      <div className="w-[27px] border-l border-[#c8c8c8]" />
      <div className="w-[47px] border-l border-[#c8c8c8]" />
      <div className="flex w-[71px] items-center justify-around border-l border-[#c8c8c8] px-1">
        {[
          ["First", "M1 1H2.500V9H1ZM8 1V9L3.500 5Z"],
          ["Previous", "M6.500 1V9L2 5Z"],
          ["Next", "M2.500 1V9L7 5Z"],
          ["Last", "M1 1V9L5.500 5ZM6.500 1H8V9H6.500Z"],
        ].map(([label, d]) => (
          <button key={label} aria-label={label}><svg width="9" height="10" viewBox="0 0 9 10" fill="#c0c0c0"><path d={d} /></svg></button>
        ))}
      </div>
      <div className="flex w-[68px] items-center gap-[9px] border-l border-[#c8c8c8] pl-2">
        <button aria-label="Show sheet sorter"><svg width="12" height="12" viewBox="0 0 12 12" fill="#b8b8b8"><path d="M0 0H3V3H0ZM4.500 0H7.500V3H4.500ZM9 0H12V3H9ZM0 4.500H3V7.500H0ZM4.500 4.500H7.500V7.500H4.500ZM9 4.500H12V7.500H9ZM0 9H3V12H0ZM4.500 9H7.500V12H4.500ZM9 9H12V12H9Z" /></svg></button>
        <button aria-label="Show filmstrip"><svg width="12" height="12" viewBox="0 0 12 12" fill="#b8b8b8"><path d="M0 0H12V7.500H0ZM0 9H3V12H0ZM4.500 9H7.500V12H4.500ZM9 9H12V12H9Z" /></svg></button>
        <button aria-label="Show tabs"><svg width="12" height="12" viewBox="0 0 12 12" fill="#666"><path d="M0 0H12V12H0Z" /></svg></button>
      </div>
    </footer>
  );
}

export default function App() {
  return (
    <div className="flex h-screen flex-col overflow-hidden bg-white font-['Open_Sans','Noto_Sans',sans-serif]">
      <header className="flex h-[23px] shrink-0 items-center pl-0.5 font-[family-name:Lato,sans-serif] text-xs text-black">
        <span className="flex size-4 items-center justify-center border-r border-b border-[#bbb]"><TableauLogo size={14} mono /></span>
        <h1 className="pl-1.5">Tableau - Dashboard</h1>
        <div className="ml-auto flex items-center gap-[35px] pr-5">
          <button aria-label="Minimize"><svg width="10" height="11" viewBox="0 0 10 11" stroke="#000"><path d="M0 5.500H10" /></svg></button>
          <button aria-label="Restore"><svg width="11" height="11" viewBox="0 0 11 11" fill="none" stroke="#000"><path d="M0.500 2.500H8.500V10.500H0.500ZM2.500 2.500V0.500H10.500V8.500H8.500" /></svg></button>
          <button aria-label="Close"><svg width="11" height="11" viewBox="0 0 11 11" stroke="#000"><path d="M0.500 0.500L10.500 10.500M10.500 0.500L0.500 10.500" /></svg></button>
        </div>
      </header>
      <nav className="flex h-[22px] shrink-0 font-[family-name:Lato,sans-serif] text-xs text-black">
        {menus.map(([name, k]) => (
          <button key={name} className={clsx("border pt-0.5 pr-2 pl-[7px] leading-4 whitespace-pre", name === "File" ? "border-[#cce8ff] bg-[#e5f3ff]" : "border-transparent")}>
            {name.slice(0, k)}<u className="underline-offset-2">{name[k]}</u>{name.slice(k + 1)}
          </button>
        ))}
      </nav>
      <Toolbar />
      <main className="flex min-h-0 flex-1">
        <LeftPane />
        <div className="flex min-w-0 flex-1 flex-col">
          <div className="flex min-h-0 flex-1">
            <div className="flex min-h-0 min-w-0 flex-1 flex-col"><Canvas /></div>
            <VScroll className="pt-1" thumb="h-[77%]" />
          </div>
          <div className="flex shrink-0 bg-[#f4f4f4] pt-px">
            <HScroll className="min-w-0 flex-1" thumb="w-[82%]" />
            <div className="w-4" />
          </div>
        </div>
        <DataGuide />
      </main>
      <TabBar />
      <StatusBar />
    </div>
  );
}
